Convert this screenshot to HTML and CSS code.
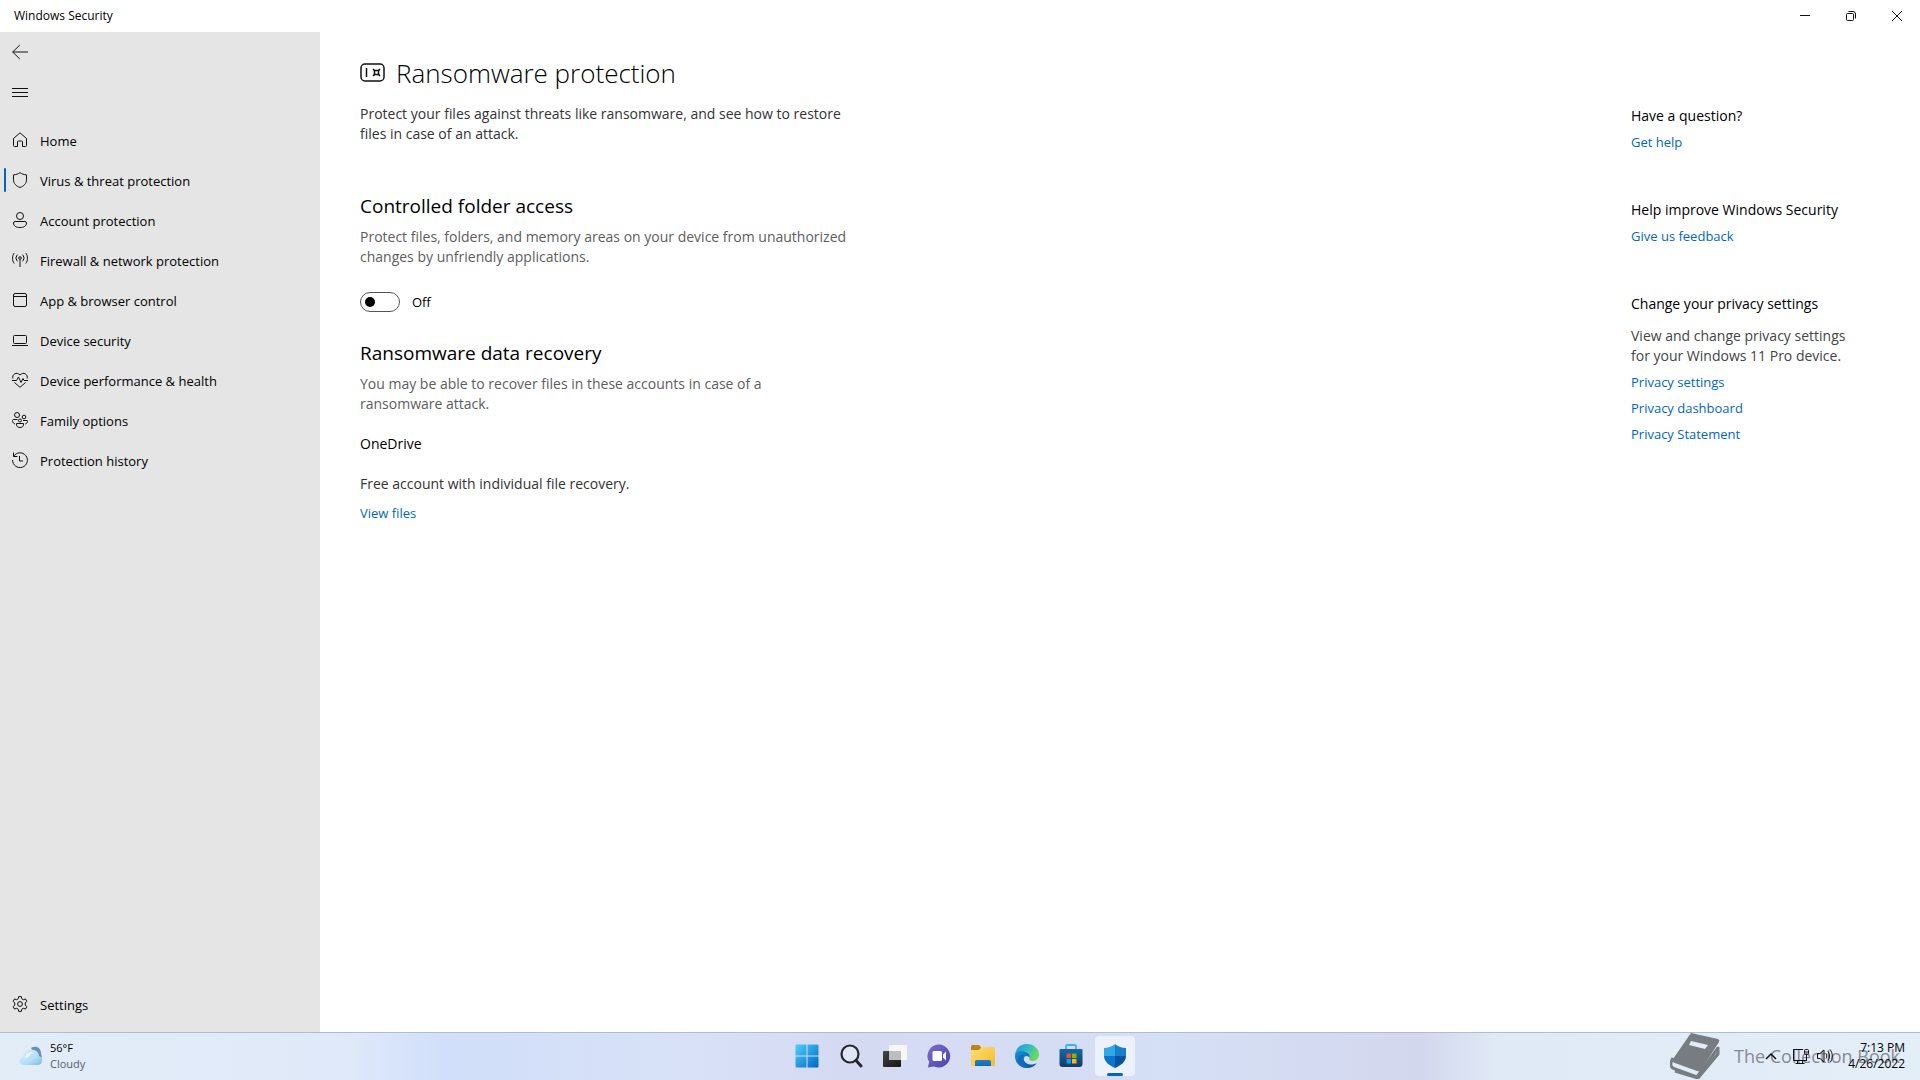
FILE: index.html
```html
<!DOCTYPE html>
<html lang="en">
  <head>
    <meta charset="UTF-8" />
    <title>Windows Security</title>
    <link rel="stylesheet" href="styles.css">
  </head>

  <body>
    <header class="titlebar">
      <span class="titlebar-name">Windows Security</span>
      <div class="window-buttons">
        <button aria-label="Minimize">
          <svg width="12" height="12" viewBox="0 0 12 12"><path d="M1 5.500h10" /></svg>
        </button>
        <button aria-label="Restore">
          <svg width="12" height="12" viewBox="0 0 12 12"><rect x="1.500" y="3.500" width="7" height="7" rx="1" /><path d="M3.500 1.500h4.500a2.500 2.500 0 0 1 2.500 2.500v4.500" /></svg>
        </button>
        <button aria-label="Close">
          <svg width="12" height="12" viewBox="0 0 12 12"><path d="M1 1l10 10M11 1L1 11" /></svg>
        </button>
      </div>
    </header>

    <div class="window">
      <nav class="sidebar">
        <button class="nav-item" aria-label="Back">
          <svg class="icon" viewBox="0 0 16 16"><path d="M16 8H.7M7.800 1L.7 8l7.100 7" /></svg>
        </button>
        <button class="nav-item menu-button" aria-label="Open navigation">
          <svg class="icon" viewBox="0 0 16 16"><path d="M0 4.500h16M0 8.500h16M0 12.500h16" /></svg>
        </button>

        <a class="nav-item" href="#home">
          <svg class="icon" viewBox="0 0 16 16"><path d="M1.500 6.500L8 .8l6.500 5.700v7a1 1 0 0 1-1 1h-3v-4.500a1 1 0 0 0-1-1h-3a1 1 0 0 0-1 1v4.500h-3a1 1 0 0 1-1-1z" /></svg>
          <span>Home</span>
        </a>
        <a class="nav-item selected" href="#virus">
          <svg class="icon" viewBox="0 0 16 16"><path d="M8 .6c2 1.500 4 2.100 6.500 2.200v5c0 3.700-2.500 6.200-6.500 7.700-4-1.500-6.500-4-6.500-7.700v-5C4 2.700 6 2.100 8 .6z" /></svg>
          <span>Virus &amp; threat protection</span>
        </a>
        <a class="nav-item" href="#account">
          <svg class="icon" viewBox="0 0 16 16"><circle cx="8" cy="4" r="3.500" /><path d="M3 9.500h10a1.500 1.500 0 0 1 1.500 1.500c0 3-2.700 4.500-6.500 4.500S1.500 14 1.500 11A1.500 1.500 0 0 1 3 9.500z" /></svg>
          <span>Account protection</span>
        </a>
        <a class="nav-item" href="#firewall">
          <svg class="icon" viewBox="0 0 16 16"><circle cx="8" cy="6" r="1.300" /><path d="M8 7.500V15M5.300 9.300a5 5 0 0 1 0-6.600M10.700 9.300a5 5 0 0 0 0-6.600M2.200 11.500c-2.200-3-2.200-7.500 0-10.500M13.800 11.500c2.200-3 2.200-7.500 0-10.500" /></svg>
          <span>Firewall &amp; network protection</span>
        </a>
        <a class="nav-item" href="#app">
          <svg class="icon" viewBox="0 0 16 16"><rect x="1.500" y="1.500" width="13" height="13" rx="1.500" /><path d="M1.500 4.500h13" /></svg>
          <span>App &amp; browser control</span>
        </a>
        <a class="nav-item" href="#device">
          <svg class="icon" viewBox="0 0 16 16"><rect x="1.500" y="3.500" width="13" height="8" rx="1" /><path d="M0 13.500h16" /></svg>
          <span>Device security</span>
        </a>
        <a class="nav-item" href="#performance">
          <svg class="icon" viewBox="0 0 16 16"><path d="M.8 6.500C-.2 2.500 4.500-.8 8 3c3.500-3.800 8.200-.5 7.200 3.500M0 8.500h4.500l2-3.500 2.500 5.500 2-4 1 2h4M2.500 10.500L8 15.300l5.500-4.800" /></svg>
          <span>Device performance &amp; health</span>
        </a>
        <a class="nav-item" href="#family">
          <svg class="icon" viewBox="0 0 16 16"><circle cx="5" cy="3" r="2.500" /><circle cx="12" cy="5" r="1.800" /><circle cx="8" cy="8.500" r="1.500" /><path d="M4.500 11.500h7c.5 2.500-1 4-3.500 4s-4-1.500-3.500-4zM5.500 7.500h-4c-1.500 0-1.500 3.500 1.500 4.500M11 8.500h4c1 0 .8 3-1.800 3.500" /></svg>
          <span>Family options</span>
        </a>
        <a class="nav-item" href="#history">
          <svg class="icon" viewBox="0 0 16 16"><path d="M1.500.5v4h4M1.700 4.300A7.400 7.400 0 1 1 .6 8M7.500 4v5H11" /></svg>
          <span>Protection history</span>
        </a>

        <a class="nav-item settings" href="#settings">
          <svg class="icon" viewBox="0 0 16 16"><circle cx="8" cy="8" r="2.400" /><path d="M6.700.6h2.600l.5 2.200 1.500.9 2.200-.7 1.300 2.300L13.200 7v2l1.600 1.700-1.300 2.300-2.200-.7-1.500.9-.5 2.200H6.700l-.5-2.200-1.500-.9-2.200.7-1.300-2.300L2.800 9V7L1.200 5.300 2.500 3l2.200.7 1.500-.9z" /></svg>
          <span>Settings</span>
        </a>
      </nav>

      <main class="content">
        <h1>
          <svg width="26" height="22" viewBox="0 0 26 22"><rect x="1" y="2" width="23" height="17" rx="4" /><path d="M6.500 6v9M13 7l1.500 1.500M20 7l-1.500 1.500M13 14l1.500-1.500M20 14l-1.500-1.500" /><rect x="14.500" y="8.500" width="4" height="4" /></svg>
          Ransomware protection
        </h1>
        <p class="intro">Protect your files against threats like ransomware, and see how to restore files in case of an attack.</p>

        <section class="folder-access">
          <h2>Controlled folder access</h2>
          <p class="description">Protect files, folders, and memory areas on your device from unauthorized changes by unfriendly applications.</p>
          <div class="toggle">
            <input type="checkbox" id="folder-toggle" />
            <label for="folder-toggle">Off</label>
          </div>
        </section>

        <section class="recovery">
          <h2>Ransomware data recovery</h2>
          <p class="description">You may be able to recover files in these accounts in case of a ransomware attack.</p>
          <h3>OneDrive</h3>
          <p>Free account with individual file recovery.</p>
          <a class="link" href="#files">View files</a>
        </section>
      </main>

      <aside class="help">
        <section>
          <h3>Have a question?</h3>
          <a class="link" href="#help">Get help</a>
        </section>
        <section>
          <h3>Help improve Windows Security</h3>
          <a class="link" href="#feedback">Give us feedback</a>
        </section>
        <section>
          <h3>Change your privacy settings</h3>
          <p>View and change privacy settings for your Windows 11 Pro device.</p>
          <a class="link" href="#privacy">Privacy settings</a>
          <a class="link" href="#dashboard">Privacy dashboard</a>
          <a class="link" href="#statement">Privacy Statement</a>
        </section>
      </aside>
    </div>

    <footer class="taskbar">
      <button class="weather">
        <svg width="24" height="20" viewBox="0 0 24 20">
          <defs>
            <linearGradient id="cloud" x1="0" y1="0" x2="1" y2="1"><stop offset="0" stop-color="#d8f1fd" /><stop offset=".6" stop-color="#b3dff6" /><stop offset="1" stop-color="#7db9de" /></linearGradient>
          </defs>
          <path d="M12 2c5-3 10 0 10 5l1 5-7-3z" fill="#6890b4" />
          <path d="M5 19c-6 0-6-7-1-8 1-6 6-9 11-7 4 1 5 4 5 6 5 2 4 9-2 9z" fill="url(#cloud)" />
          <path d="M6 12c1-5 5-7 9-5-3 0-5 2-5 4" fill="#e7f7fe" />
        </svg>
        <span class="weather-text">56°F<small>Cloudy</small></span>
      </button>

      <div class="apps">
        <button aria-label="Start">
          <svg viewBox="0 0 24 24">
            <defs><linearGradient id="start" x1="0" y1="0" x2="1" y2="1"><stop offset="0" stop-color="#4fd0fb" /><stop offset="1" stop-color="#0067c5" /></linearGradient></defs>
            <path d="M.5 1.500a1 1 0 0 1 1-1H11.500v11H.5zM12.500.5h10a1 1 0 0 1 1 1v10h-11zM.5 12.500h11v11h-10a1 1 0 0 1-1-1zM12.500 12.500h11v10a1 1 0 0 1-1 1h-10z" fill="url(#start)" />
          </svg>
        </button>
        <button aria-label="Search">
          <svg viewBox="0 0 24 24"><circle cx="11" cy="10" r="8.500" fill="#dfe6f4" stroke="#25272b" stroke-width="2.200" /><path d="M17 16.500l5 5.500" stroke="#25272b" stroke-width="3" stroke-linecap="round" /></svg>
        </button>
        <button aria-label="Task view">
          <svg viewBox="0 0 24 24">
            <defs><linearGradient id="task" x1="0" y1="0" x2="1" y2="1"><stop offset="0" stop-color="#444" /><stop offset="1" stop-color="#161616" /></linearGradient></defs>
            <rect x="0" y="7" width="18" height="16" rx="1" fill="url(#task)" /><rect x="6" y="1" width="18" height="15" rx="1" fill="#f6f6f5" /><path d="M6 7h12v9H6z" fill="#bdbdbd" />
          </svg>
        </button>
        <button aria-label="Chat">
          <svg viewBox="0 0 24 24">
            <defs><linearGradient id="chat" x1="0" y1="0" x2="1" y2="1"><stop offset="0" stop-color="#7b6bd0" /><stop offset="1" stop-color="#4a45ad" /></linearGradient></defs>
            <path d="M12 .5A11.500 11.500 0 1 1 7 22.500L.8 23.400 2.200 18A11.500 11.500 0 0 1 12 .5z" fill="url(#chat)" /><rect x="5.500" y="7" width="9.500" height="10" rx="1.500" fill="#fff" /><path d="M16 10.500l3-3v9l-3-3z" fill="#fff" />
          </svg>
        </button>
        <button aria-label="File Explorer">
          <svg viewBox="0 0 24 24">
            <defs><linearGradient id="folder" x1="0" y1="0" x2="1" y2="1"><stop offset="0" stop-color="#ffdf75" /><stop offset="1" stop-color="#f7b92c" /></linearGradient><linearGradient id="tray" x1="0" y1="0" x2="0" y2="1"><stop offset="0" stop-color="#1b82d2" /><stop offset="1" stop-color="#1468ae" /></linearGradient></defs>
            <path d="M0 2.500A1.500 1.500 0 0 1 1.500 1H8l2 2v4H0z" fill="#bd8612" /><path d="M0 6h8l2.500-3H22.500A1.500 1.500 0 0 1 24 4.500v16a1.500 1.500 0 0 1-1.500 1.500h-21A1.500 1.500 0 0 1 0 20.500z" fill="url(#folder)" /><path d="M4 22v-4.500A1.500 1.500 0 0 1 5.500 16h13a1.500 1.500 0 0 1 1.500 1.500V22z" fill="url(#tray)" />
          </svg>
        </button>
        <button aria-label="Edge">
          <svg viewBox="0 0 24 24">
            <defs><linearGradient id="edge-top" x1="0" y1="0" x2="1" y2=".4"><stop offset="0" stop-color="#2496d8" /><stop offset=".6" stop-color="#34bfc0" /><stop offset="1" stop-color="#6bd95a" /></linearGradient><linearGradient id="edge-bottom" x1="0" y1="0" x2="1" y2="1"><stop offset="0" stop-color="#1b8fdd" /><stop offset="1" stop-color="#0d4a94" /></linearGradient></defs>
            <path d="M0 12C0 5 5 0 12 0s12 5 12 10.500c0 4-3 6.500-6.500 6.500-3 0-4-1.500-3-3 2-3-1-6.500-5-6.500C5 7.500 1 9 0 12z" fill="url(#edge-top)" />
            <path d="M0 12c0-3.500 4-5.500 8-5 5 .5 8 4 6.500 6.500C12 10.500 8 12 9 16c.8 3.200 5 5 8.500 4.500 2-.2 3.500-1 4.500-1.500-2 3-6 5-10 5C5 24 0 19 0 12z" fill="url(#edge-bottom)" />
            <path d="M8.500 11C6 14 7 20 13.500 23.900 7 24.500 2 20 3 14.500 3.500 12 6 10.500 8.500 11z" fill="#126cbd" />
          </svg>
        </button>
        <button aria-label="Microsoft Store">
          <svg viewBox="0 0 24 24">
            <defs><linearGradient id="store" x1="0" y1="0" x2="0" y2="1"><stop offset="0" stop-color="#1668a8" /><stop offset="1" stop-color="#153a68" /></linearGradient></defs>
            <path d="M7 6V2.500A1.500 1.500 0 0 1 8.500 1h7A1.500 1.500 0 0 1 17 2.500V6" fill="none" stroke="#3bb5e8" stroke-width="1.800" /><path d="M.5 6A1 1 0 0 1 1.500 5h21a1 1 0 0 1 1 1v14a3 3 0 0 1-3 3h-17a3 3 0 0 1-3-3z" fill="url(#store)" />
            <path d="M7.500 9.500H12V14H7.500z" fill="#f25022" /><path d="M13 9.500h4.500V14H13z" fill="#7fba00" /><path d="M7.500 15H12v4.500H7.500z" fill="#00a4ef" /><path d="M13 15h4.500v4.500H13z" fill="#ffb900" />
          </svg>
        </button>
        <button class="active" aria-label="Windows Security">
          <svg viewBox="0 0 24 24"><path d="M12 0C9 2.500 5 4 1 4v8h11z" fill="#32a9e6" /><path d="M12 0c3 2.500 7 4 11 4v8H12z" fill="#1880cb" /><path d="M1 12c0 5.500 5 9.500 11 12V12z" fill="#0874ca" /><path d="M23 12c0 5.500-5 9.500-11 12V12z" fill="#0753a2" /></svg>
        </button>
      </div>

      <div class="tray">
        <button aria-label="Show hidden icons">
          <svg width="12" height="12" viewBox="0 0 12 12"><path d="M1 9l5-5 5 5" stroke-width="1.500" /></svg>
        </button>
        <button aria-label="Network">
          <svg width="16" height="16" viewBox="0 0 16 16"><path d="M10 1.500H.5v11h13V9M4.500 12.500v3M9.500 12.500v3M2.500 15.500h9M13.500 7v6" /><rect x="11.500" y="1.500" width="4" height="5" rx="1" /><path d="M11.500 4h4" /></svg>
        </button>
        <button aria-label="Volume">
          <svg width="16" height="16" viewBox="0 0 16 16"><path d="M.5 5.500h2.500L7 2v12l-4-3.500H.5zM9 5.500c1 1.500 1 3.500 0 5M11 3.500c2 2.500 2 6.500 0 9M13 1.500c3 3.500 3 9.500 0 13" /></svg>
        </button>
        <div class="clock">7:13 PM<br />4/26/2022</div>
      </div>

      <div class="watermark">
        <svg width="50" height="46" viewBox="0 0 50 46">
          <path fill-rule="evenodd" d="M21 0L48 6Q50 7 49 9L31 37Q30 39 27 38L5 30Q2 29 3 26zM21 8l-2 4 16 4 3-4z" />
          <path d="M3 25C-1 32 1 35 5 36l22 8L48 15v6L28 45 5 38" fill="none" stroke="#777c80" stroke-width="3" stroke-linejoin="round" />
        </svg>
        The Collection Book
      </div>
    </footer>
  </body>
</html>
```

FILE: styles.css
```css
* {
  box-sizing: border-box;
}

body {
  margin: 0;
  height: 100vh;
  display: flex;
  flex-direction: column;
  background-color: white;
  color: #000;
  font-family: "Open Sans", "Noto Sans", sans-serif;
  font-size: 14px;
  line-height: 20px;
}

h1,
h2,
h3,
p {
  margin: 0;
}

button {
  border: none;
  padding: 0;
  background: none;
  color: inherit;
  font: inherit;
}

a {
  text-decoration: none;
}

svg {
  flex: none;
}

.titlebar svg,
.sidebar svg,
.content svg,
.tray svg {
  fill: none;
  stroke: #111;
}

/* title bar */
.titlebar {
  height: 32px;
  display: flex;
  justify-content: space-between;
  align-items: center;
  padding-left: 14px;
}

.titlebar-name {
  font-size: 12px;
}

.window-buttons {
  display: flex;
}

.window-buttons button {
  width: 46px;
  height: 32px;
  display: flex;
  align-items: center;
  justify-content: center;
}

.window {
  flex: 1;
  display: flex;
  min-height: 0;
}

/* sidebar */
.sidebar {
  width: 320px;
  flex: none;
  display: flex;
  flex-direction: column;
  padding-bottom: 8px;
  background-color: #e5e5e5;
}

.nav-item {
  height: 40px;
  display: flex;
  align-items: center;
  gap: 12px;
  padding: 0 12px;
  color: #000;
  font-size: 13px;
}

.nav-item span {
  padding-top: 2px;
}

.icon {
  width: 16px;
  height: 16px;
}

.menu-button {
  margin-bottom: 8px;
}

.selected {
  padding-left: 4px;
}

.selected::before {
  content: "";
  width: 2px;
  height: 24px;
  margin-right: -6px;
  border-radius: 1px;
  background-color: #0067c0;
}

.settings {
  margin-top: auto;
}

/* page */
.content {
  flex: 1;
  padding: 21px 40px;
  color: #333;
}

.content > * {
  max-width: 500px;
}

h1 {
  display: flex;
  align-items: center;
  gap: 10px;
  color: #000;
  font-size: 26px;
  font-weight: 300;
  line-height: 40px;
}

.content h1 svg {
  stroke-width: 1.5px;
}

h2 {
  margin-bottom: 7px;
  color: #000;
  font-size: 19px;
  font-weight: 400;
  line-height: 28px;
}

h3 {
  color: #000;
  font-size: 14px;
  font-weight: 400;
}

.intro {
  margin-top: 11px;
}

.description {
  color: #5d5d5d;
}

.folder-access {
  margin-top: 48px;
}

.toggle {
  display: flex;
  align-items: center;
  gap: 12px;
  margin-top: 25px;
  color: #000;
  font-size: 13px;
}

.toggle input {
  appearance: none;
  display: flex;
  align-items: center;
  width: 40px;
  height: 20px;
  margin: 0;
  padding-left: 4px;
  border: 1px solid #555;
  border-radius: 10px;
}

.toggle input::before {
  content: "";
  width: 10px;
  height: 10px;
  border-radius: 5px;
  background-color: #000;
}

.toggle input:checked {
  justify-content: flex-end;
  padding-right: 4px;
}

.recovery {
  margin-top: 27px;
}

.recovery .description {
  max-width: 420px;
}

.recovery h3 {
  margin: 20px 0;
}

.link {
  display: block;
  margin-top: 6px;
  color: #0067c0;
  font-size: 13px;
}

.recovery .link {
  margin-top: 9px;
}

.help {
  width: 289px;
  flex: none;
  display: flex;
  flex-direction: column;
  gap: 48px;
  padding: 74px 60px 0 0;
}

.help p {
  margin-top: 12px;
  color: #444;
}

/* taskbar */
.taskbar {
  height: 48px;
  flex: none;
  position: relative;
  display: grid;
  grid-template-columns: 1fr auto 1fr;
  align-items: center;
  padding-bottom: 2px;
  border-top: 1px solid #b3bccb;
  background: linear-gradient(90deg, #e3edf8 0%, #dfe9f9 18%, #d1dffa 23%, #d8e1f7 36%, #d5daf3 44%, #d5dff5 61%, #d3d7ee 74%, #e0eaf6 78%, #e3eef9 100%);
  font-size: 12px;
  line-height: 16px;
}

.weather {
  display: flex;
  align-items: center;
  gap: 7px;
  padding-left: 19px;
  font-size: 11px;
  text-align: left;
}

.weather-text small {
  display: block;
  color: #555d6b;
  font-size: 11px;
}

.apps {
  display: flex;
  gap: 4px;
  padding-left: 2px;
}

.apps button {
  width: 40px;
  height: 40px;
  display: flex;
  align-items: center;
  justify-content: center;
  border-radius: 4px;
}

.apps svg {
  width: 24px;
  height: 24px;
}

.apps .active {
  position: relative;
  background-color: #edf1fb;
}

.apps .active::after {
  content: "";
  position: absolute;
  bottom: 0;
  left: 12px;
  width: 16px;
  height: 3px;
  border-radius: 2px;
  background-color: #0067c0;
}

.tray {
  z-index: 1;
  display: flex;
  justify-content: flex-end;
  align-items: center;
  gap: 8px;
  padding-right: 15px;
}

.tray button {
  display: flex;
}

.tray button:first-child {
  margin-right: 8px;
}

.clock {
  width: 64px;
  text-align: right;
}

.watermark {
  position: absolute;
  top: 0;
  right: 20px;
  display: flex;
  align-items: center;
  gap: 14px;
  color: #858b91;
  fill: #777c80;
  font-size: 18px;
  line-height: 44px;
}
```
